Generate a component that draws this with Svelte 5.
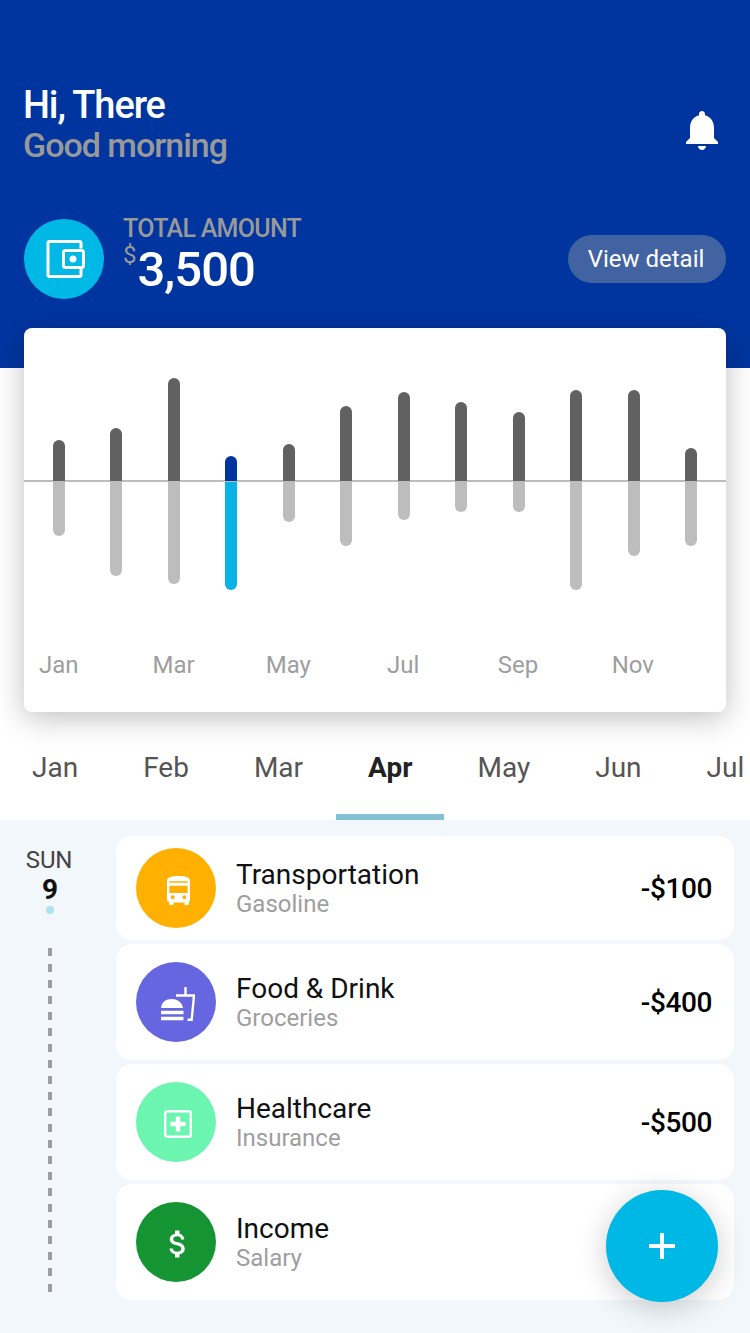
<script>
	const bars = [
		{ up: 41, down: 55 },
		{ up: 53, down: 95 },
		{ up: 103, down: 103 },
		{ up: 25, down: 109, active: true },
		{ up: 37, down: 41 },
		{ up: 75, down: 65 },
		{ up: 89, down: 39 },
		{ up: 79, down: 31 },
		{ up: 69, down: 31 },
		{ up: 91, down: 109 },
		{ up: 91, down: 75 },
		{ up: 33, down: 65 }
	];
	const chart_labels = ["Jan", "", "Mar", "", "May", "", "Jul", "", "Sep", "", "Nov", ""];
	const tabs = ["Jan", "Feb", "Mar", "Apr", "May", "Jun", "Jul"];
	const items = [
		{ title: "Transportation", sub: "Gasoline", amount: "-$100", color: "#ffb000", icon: "bus", tall: false },
		{ title: "Food & Drink", sub: "Groceries", amount: "-$400", color: "#6666e0", icon: "food", tall: true },
		{ title: "Healthcare", sub: "Insurance", amount: "-$500", color: "#6cf5b0", icon: "health", tall: true },
		{ title: "Income", sub: "Salary", amount: "", color: "#149432", icon: "money", tall: true }
	];
</script>

<div class="page">
	<header class="header">
		<div class="top">
			<div>
				<h1>Hi, There</h1>
				<p class="morning">Good morning</p>
			</div>
			<svg class="bell" viewBox="0 0 24 24" width="48" height="48" fill="#fff">
				<path d="M12 22c1.100 0 2-.9 2-2h-4c0 1.100.89 2 2 2zm6-6v-5c0-3.070-1.640-5.640-4.500-6.320V4c0-.83-.67-1.500-1.500-1.500s-1.500.67-1.500 1.500v.68C7.630 5.360 6 7.920 6 11v5l-2 2v1h16v-1l-2-2z" />
			</svg>
		</div>
		<div class="total">
			<div class="wallet">
				<svg viewBox="0 0 40 38" width="40" height="38" fill="none" stroke="#fff" stroke-width="3">
					<path d="M35 8.500V3a1.500 1.500 0 0 0-1.500-1.500H3.500A1.500 1.500 0 0 0 2 3v32a1.500 1.500 0 0 0 1.500 1.500h30A1.500 1.500 0 0 0 35 35v-7" />
					<rect x="17.500" y="10.500" width="20" height="17" rx="2" />
					<circle cx="27" cy="19" r="3.500" fill="#fff" stroke="none" />
				</svg>
			</div>
			<div class="total_text">
				<div class="total_label">TOTAL AMOUNT</div>
				<div class="total_value"><span class="currency">$</span>3,500</div>
			</div>
			<button class="detail">View detail</button>
		</div>
	</header>

	<section class="card">
		<div class="chart">
			<div class="axis"></div>
			{#each bars as bar}
				<div class="col">
					<div class="half up">
						<div class="bar dark" class:active={bar.active} style="height: {bar.up}px"></div>
					</div>
					<div class="half down">
						<div class="bar light" class:active={bar.active} style="height: {bar.down}px"></div>
					</div>
				</div>
			{/each}
		</div>
		<div class="labels">
			{#each chart_labels as label}
				<span>{label}</span>
			{/each}
		</div>
	</section>

	<nav class="tabs">
		{#each tabs as tab}
			<div class="tab" class:selected={tab === "Apr"}>{tab}</div>
		{/each}
	</nav>

	<main class="list">
		<aside class="day">
			<div class="dow">SUN</div>
			<div class="num">9</div>
			<div class="dot"></div>
			<div class="dashes"></div>
		</aside>
		<div class="rows">
			{#each items as item}
				<div class="row" class:tall={item.tall}>
					<div class="circle" style="background: {item.color}">
						{#if item.icon === "bus"}
							<svg viewBox="0 0 26 30" width="25" height="29" fill="#fff">
								<path fill-rule="evenodd" d="M1 5c0-3.500 4-5 12-5s12 1.500 12 5v19c0 1.300-.5 2.300-1.200 2.800V29a1 1 0 0 1-1 1h-2.600a1 1 0 0 1-1-1v-1.500H7.800V29a1 1 0 0 1-1 1H4.200a1 1 0 0 1-1-1v-2.200C1.500 26.300 1 25.300 1 24zM3.500 5.500v1.500h19V5.500zM3.500 10v7.500h19V10zM7 20a2 2 0 1 0 0 4 2 2 0 0 0 0-4zm12 0a2 2 0 1 0 0 4 2 2 0 0 0 0-4z" />
							</svg>
						{:else if item.icon === "food"}
							<svg viewBox="0 0 34 34" width="34" height="34" fill="none" stroke="#fff" stroke-width="2.400">
								<path d="M15 8.500h18l-2.300 24.300h-4.200M24.500 8.500V0" />
								<path d="M0 21c.5-6 5-9 10.500-9S21 15 22 21z" fill="#fff" stroke="none" />
								<path d="M0 25.500h22.500M0 31.500h22.500" stroke-width="3.400" />
							</svg>
						{:else if item.icon === "health"}
							<svg viewBox="0 0 28 28" width="28" height="28" fill="none" stroke="#fff" stroke-width="2.400">
								<rect x="1.200" y="1.200" width="25.600" height="25.600" rx="2" />
								<path d="M14 6.500v15M6.500 14h15" stroke-width="4.400" />
							</svg>
						{:else}
							<svg viewBox="0 0 24 24" width="36" height="36" fill="#fff">
								<path d="M11.800 10.900c-2.270-.59-3-1.200-3-2.150 0-1.090 1.010-1.850 2.700-1.850 1.780 0 2.440.85 2.500 2.100h2.210c-.07-1.720-1.120-3.300-3.210-3.810V3h-3v2.160c-1.940.42-3.500 1.680-3.500 3.610 0 2.310 1.910 3.460 4.700 4.130 2.500.6 3 1.480 3 2.410 0 .69-.49 1.790-2.700 1.790-2.060 0-2.870-.92-2.980-2.100h-2.200c.12 2.190 1.760 3.420 3.680 3.830V21h3v-2.150c1.950-.37 3.500-1.500 3.500-3.550 0-2.840-2.430-3.810-4.700-4.400z" />
							</svg>
						{/if}
					</div>
					<div class="row_text">
						<div class="title">{item.title}</div>
						<div class="sub">{item.sub}</div>
					</div>
					<div class="amount">{item.amount}</div>
				</div>
			{/each}
		</div>
		<button class="fab" aria-label="Add">
			<svg viewBox="0 0 26 26" width="26" height="26" stroke="#fff" stroke-width="4"><path d="M13 0v26M0 13h26" /></svg>
		</button>
	</main>
</div>

<style>
	:global(body) {
		margin: 0;
		background: #fff;
		overflow: hidden;
	}
	* {
		box-sizing: border-box;
	}
	.page {
		width: 750px;
		height: 1333px;
		overflow: hidden;
		position: relative;
		display: flex;
		flex-direction: column;
		font-family: Roboto, sans-serif;
	}
	.header {
		height: 368px;
		flex: none;
		background: #0035a0;
		padding: 85px 24px 0;
		color: #fff;
	}
	.top {
		display: flex;
		justify-content: space-between;
		align-items: center;
	}
	h1 {
		margin: 0 0 0 -1px;
		font-size: 38px;
		line-height: 41px;
		font-weight: 500;
		letter-spacing: -1.1px;
	}
	.morning {
		margin: 0 0 0 -1px;
		font-size: 34px;
		line-height: 38px;
		font-weight: 500;
		color: #999;
		letter-spacing: -1px;
	}
	.bell {
		margin-top: 10px;
	}
	.total {
		display: flex;
		align-items: center;
		margin-top: 55px;
	}
	.wallet {
		width: 80px;
		height: 80px;
		border-radius: 50%;
		background: #00b8e6;
		display: flex;
		align-items: center;
		justify-content: center;
		padding-left: 4px;
	}
	.total_text {
		margin: -9px 0 0 19px;
		flex: 1;
	}
	.total_label {
		font-size: 25px;
		line-height: 28px;
		font-weight: 500;
		color: #999;
		letter-spacing: -0.7px;
	}
	.total_value {
		font-size: 49px;
		line-height: 50px;
		font-weight: 500;
		letter-spacing: -1px;
		margin-top: 2px;
	}
	.currency {
		font-size: 24px;
		line-height: 0;
		font-weight: 400;
		color: #999;
		vertical-align: 23px;
		margin-right: 1px;
		letter-spacing: 0;
	}
	.detail {
		width: 158px;
		height: 48px;
		border: 0;
		border-radius: 24px;
		background: #4263a2;
		color: #fff;
		font: 400 24px Roboto, sans-serif;
		padding: 0 2px 0 0;
	}
	.card {
		position: relative;
		flex: none;
		margin: -40px 24px 0;
		height: 384px;
		background: #fff;
		border-radius: 8px;
		box-shadow: 0 6px 30px rgba(0, 0, 0, 0.25);
		padding: 0 6px;
	}
	.chart {
		position: relative;
		display: grid;
		grid-template-columns: repeat(12, 1fr);
		height: 312px;
	}
	.axis {
		position: absolute;
		left: -6px;
		right: -6px;
		top: 152px;
		height: 2px;
		background: #bdbdbd;
	}
	.col {
		display: flex;
		flex-direction: column;
		align-items: center;
	}
	.half {
		display: flex;
		position: relative;
	}
	.half.up {
		height: 153px;
		align-items: flex-end;
	}
	.bar {
		width: 12px;
	}
	.dark {
		background: #616161;
		border-radius: 6px 6px 0 0;
	}
	.dark.active {
		background: #0035a0;
	}
	.light {
		background: #bdbdbd;
		border-radius: 0 0 6px 6px;
	}
	.light.active {
		background: #08b3e5;
		margin-top: 1px;
		height: 108px !important;
	}
	.labels {
		display: grid;
		grid-template-columns: repeat(12, 1fr);
		font-size: 24px;
		line-height: 28px;
		color: #9e9e9e;
		text-align: center;
		white-space: nowrap;
		padding: 11px 1px 0 0;
	}
	.tabs {
		position: relative;
		flex: none;
		display: flex;
		gap: 1px;
		height: 108px;
		width: 800px;
	}
	.tab {
		flex: none;
		padding: 0 32px;
		font-size: 28px;
		line-height: 111px;
		color: #555;
	}
	.tab.selected {
		font-weight: 700;
		color: #222;
		box-shadow: inset 0 -6px 0 #84c1d2;
	}
	.list {
		flex: 1;
		position: relative;
		display: flex;
		background: #f1f7fa;
		padding: 16px 16px 0 0;
	}
	.day {
		width: 116px;
		flex: none;
		display: flex;
		flex-direction: column;
		align-items: center;
		padding-right: 16px;
		color: #444;
	}
	.dow {
		font-size: 24px;
		line-height: 27px;
		letter-spacing: -0.2px;
		margin: 11px 2px 0 0;
	}
	.num {
		font-size: 28px;
		line-height: 28px;
		font-weight: 700;
		color: #111;
		margin-top: 2px;
	}
	.dot {
		width: 8px;
		height: 8px;
		border-radius: 50%;
		background: #afe3ef;
		margin-top: 2px;
	}
	.dashes {
		width: 4px;
		height: 344px;
		margin-top: 34px;
		background: repeating-linear-gradient(#9e9e9e 0 8px, transparent 8px 16px);
	}
	.rows {
		flex: 1;
		display: flex;
		flex-direction: column;
		gap: 4px;
	}
	.row {
		display: flex;
		align-items: center;
		background: #fff;
		border-radius: 16px;
		padding: 12px 22px 12px 20px;
	}
	.row.tall {
		padding-top: 18px;
		padding-bottom: 18px;
	}
	.circle {
		width: 80px;
		height: 80px;
		flex: none;
		border-radius: 50%;
		display: flex;
		align-items: center;
		justify-content: center;
		padding: 4px 0 0 4px;
	}
	.row_text {
		flex: 1;
		margin-left: 20px;
	}
	.title {
		font-size: 28px;
		line-height: 32px;
		color: #111;
	}
	.sub {
		font-size: 24px;
		line-height: 26px;
		color: #9e9e9e;
	}
	.amount {
		font-size: 28px;
		font-weight: 500;
		color: #000;
		letter-spacing: -0.4px;
	}
	.fab {
		position: absolute;
		left: 606px;
		top: 370px;
		width: 112px;
		height: 112px;
		border-radius: 50%;
		border: 0;
		padding: 0;
		background: #00b8e6;
		display: flex;
		align-items: center;
		justify-content: center;
		box-shadow: 0 6px 30px rgba(0, 0, 0, 0.2);
	}
</style>
